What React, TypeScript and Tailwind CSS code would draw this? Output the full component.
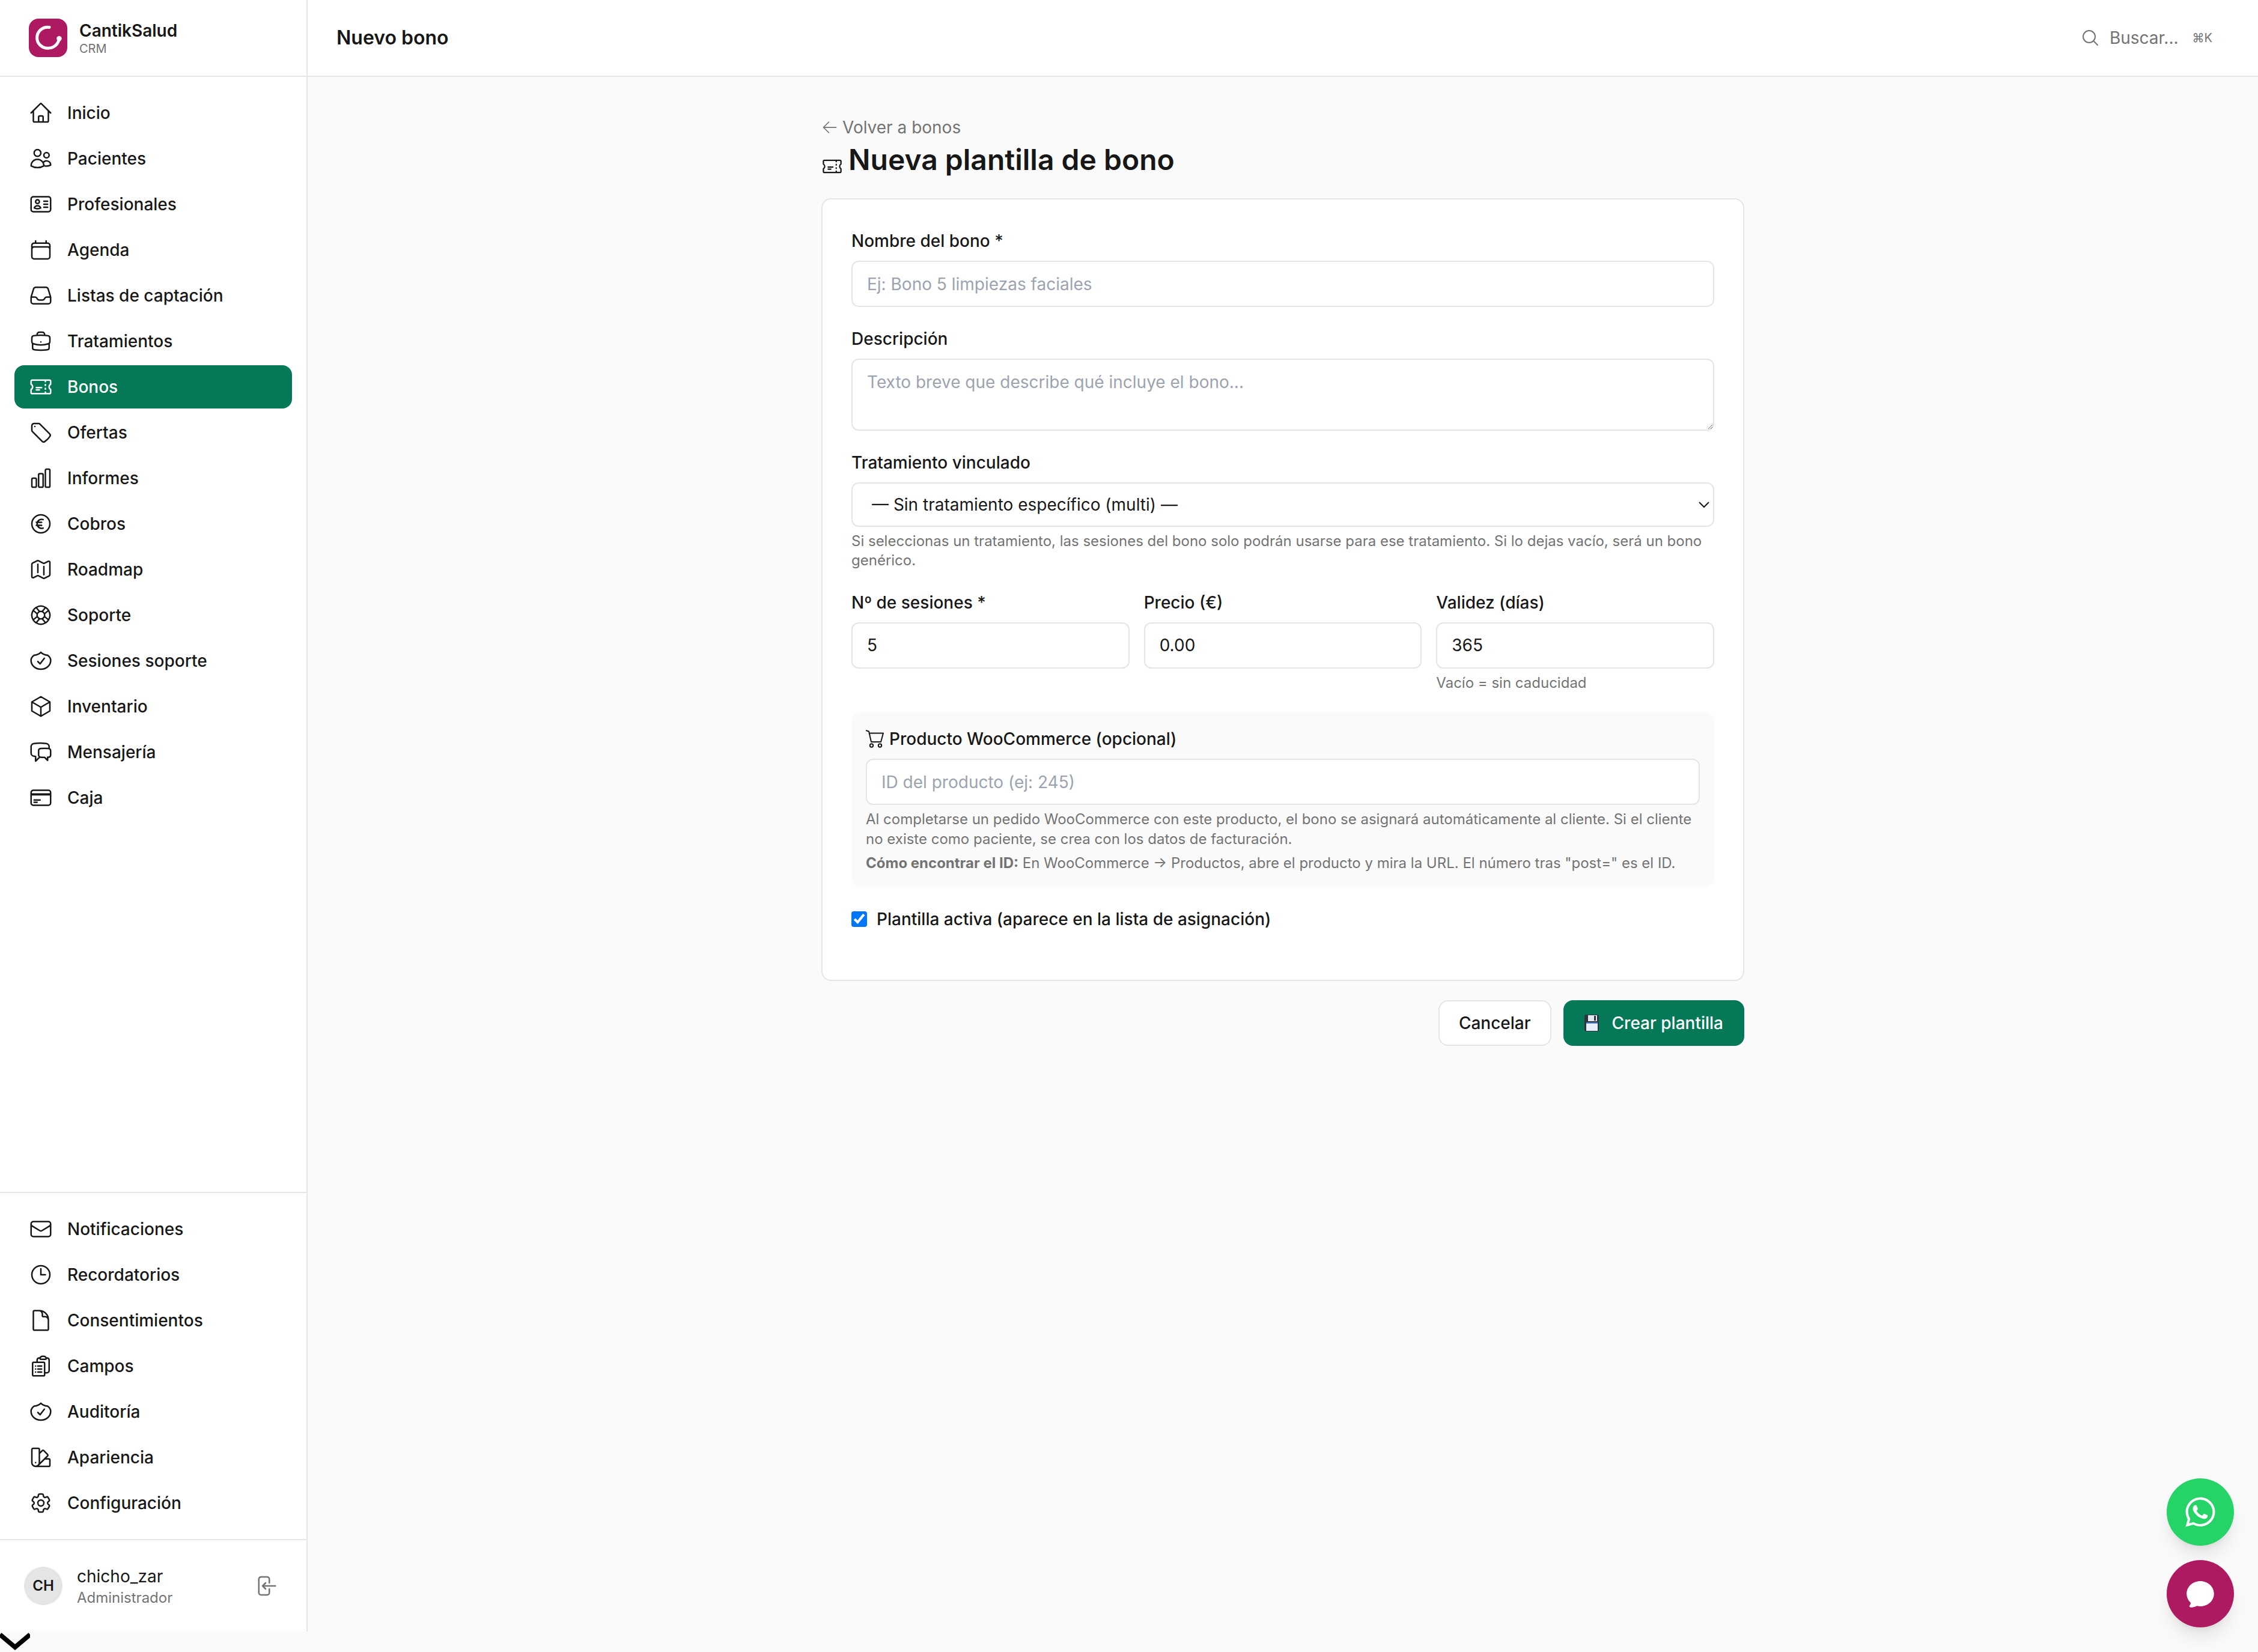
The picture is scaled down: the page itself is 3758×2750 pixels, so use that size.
import {
  HiOutlineHome,
  HiOutlineUsers,
  HiOutlineIdentification,
  HiOutlineCalendar,
  HiOutlineInbox,
  HiOutlineBriefcase,
  HiOutlineTicket,
  HiOutlineTag,
  HiOutlineChartBar,
  HiOutlineCurrencyEuro,
  HiOutlineMap,
  HiOutlineLifebuoy,
  HiOutlineCube,
  HiOutlineChatBubbleLeftRight,
  HiOutlineCreditCard,
  HiOutlineEnvelope,
  HiOutlineClock,
  HiOutlineDocument,
  HiOutlineClipboardDocumentList,
  HiOutlineSwatch,
  HiOutlineCog6Tooth,
  HiOutlineArrowLeftEndOnRectangle,
  HiOutlineMagnifyingGlass,
  HiOutlineArrowLeft,
  HiChatBubbleOvalLeft,
} from 'react-icons/hi2';
import { FaWhatsapp } from 'react-icons/fa';

// wide rounded shield, not the stock heroicon shape
function ShieldIcon({ className }: { className?: string }) {
  return (
    <svg viewBox="0 0 24 24" className={className} fill="none" stroke="currentColor" strokeWidth="1.5" strokeLinecap="round" strokeLinejoin="round">
      <path d="M12 3.5C13.6 5.2 16 6.2 18.8 6.5C20.8 8 21.8 9.5 21.8 11.5C21.8 16.5 17.5 20.4 12 20.4C6.5 20.4 2.2 16.5 2.2 11.5C2.2 9.5 3.2 8 5.2 6.5C8 6.2 10.4 5.2 12 3.5Z" />
      <path d="M9 12.75L11.25 15L15.5 9.5" />
    </svg>
  );
}

const mainNav = [
  { label: 'Inicio', icon: HiOutlineHome },
  { label: 'Pacientes', icon: HiOutlineUsers },
  { label: 'Profesionales', icon: HiOutlineIdentification },
  { label: 'Agenda', icon: HiOutlineCalendar },
  { label: 'Listas de captación', icon: HiOutlineInbox },
  { label: 'Tratamientos', icon: HiOutlineBriefcase },
  { label: 'Bonos', icon: HiOutlineTicket, active: true },
  { label: 'Ofertas', icon: HiOutlineTag },
  { label: 'Informes', icon: HiOutlineChartBar },
  { label: 'Cobros', icon: HiOutlineCurrencyEuro },
  { label: 'Roadmap', icon: HiOutlineMap },
  { label: 'Soporte', icon: HiOutlineLifebuoy },
  { label: 'Sesiones soporte', icon: ShieldIcon },
  { label: 'Inventario', icon: HiOutlineCube },
  { label: 'Mensajería', icon: HiOutlineChatBubbleLeftRight },
  { label: 'Caja', icon: HiOutlineCreditCard },
];

const bottomNav = [
  { label: 'Notificaciones', icon: HiOutlineEnvelope },
  { label: 'Recordatorios', icon: HiOutlineClock },
  { label: 'Consentimientos', icon: HiOutlineDocument },
  { label: 'Campos', icon: HiOutlineClipboardDocumentList },
  { label: 'Auditoría', icon: ShieldIcon },
  { label: 'Apariencia', icon: HiOutlineSwatch },
  { label: 'Configuración', icon: HiOutlineCog6Tooth },
];

function NavItem({ label, icon: Icon, active }: { label: string; icon: any; active?: boolean }) {
  return (
    <a
      className={
        active
          ? 'flex items-center gap-3 h-9 px-3 rounded-lg text-sm font-medium bg-[#047857] text-white'
          : 'flex items-center gap-3 h-9 px-3 rounded-lg text-sm font-medium text-[#171717]'
      }
    >
      <Icon className="w-5 h-5 shrink-0" />
      <span>{label}</span>
    </a>
  );
}

function Logo() {
  return (
    <div className="w-8 h-8 rounded-lg bg-[#ad1a62] shrink-0">
      <svg viewBox="0 0 32 32" className="w-8 h-8" fill="none">
        <path d="M17 7.2C11 6.5 6.8 11 6.8 16C6.8 21 11 24.6 16 24.6C20.5 24.6 24.2 21.5 25 17.5" stroke="#fff" strokeWidth="2.5" strokeLinecap="round" />
        <circle cx="25.2" cy="16.6" r="2.1" fill="#fff" />
      </svg>
    </div>
  );
}

function FloppyIcon() {
  return (
    <svg viewBox="0 0 24 28" className="w-3 h-3.5 shrink-0">
      <rect x="0" y="0" width="24" height="28" rx="3" fill="#2b3440" />
      <rect x="6" y="1" width="15" height="10" fill="#e4e8ee" />
      <rect x="16" y="2" width="3" height="8" fill="#2b3440" />
      <rect x="3" y="13" width="19" height="14" fill="#e6eefa" />
      <rect x="3" y="13" width="19" height="2" fill="#5a8fd8" />
    </svg>
  );
}

function CartIcon() {
  return (
    <svg viewBox="0 0 30 30" className="w-[15px] h-[15px] shrink-0" fill="none" stroke="currentColor" strokeWidth="2">
      <path d="M0 1L5 2.5L9 20H25L29 5.5H5.5" strokeLinejoin="round" />
      <circle cx="9.5" cy="26" r="2.7" />
      <circle cx="23.5" cy="26" r="2.7" />
    </svg>
  );
}

export default function App() {
  return (
    <div className="relative w-[1879px] h-[1375px] overflow-hidden bg-[#fafafa] text-[#171717] font-['Inter',sans-serif] [zoom:2]">
      <div className="flex h-[1358px]">
        {/* Sidebar */}
        <aside className="w-64 shrink-0 flex flex-col bg-white border-r border-[#e5e5e5]">
          <div className="h-16 shrink-0 flex items-center gap-2.5 px-6 border-b border-[#e5e5e5]">
            <Logo />
            <div className="pb-0.5">
              <div className="text-sm font-semibold leading-5">CantikSalud</div>
              <div className="text-[10px] leading-[10px] text-[#737373]">CRM</div>
            </div>
          </div>
          <nav className="flex-1 p-3 flex flex-col gap-0.5">
            {mainNav.map((item) => (
              <NavItem key={item.label} {...item} />
            ))}
          </nav>
          <div className="p-3 flex flex-col gap-0.5 border-t border-[#e5e5e5]">
            {bottomNav.map((item) => (
              <NavItem key={item.label} {...item} />
            ))}
          </div>
          <div className="h-[77px] shrink-0 flex items-center gap-3 px-5 border-t border-[#e5e5e5]">
            <div className="w-8 h-8 rounded-full bg-[#e5e5e5] flex items-center justify-center text-xs font-semibold">CH</div>
            <div className="flex-1">
              <div className="text-sm leading-5">chicho_zar</div>
              <div className="text-xs leading-4 text-[#737373]">Administrador</div>
            </div>
            <button className="p-1 text-[#737373]">
              <HiOutlineArrowLeftEndOnRectangle className="w-5 h-5" />
            </button>
          </div>
        </aside>

        {/* Main */}
        <div className="flex-1 flex flex-col min-w-0">
          <header className="h-16 shrink-0 flex items-center justify-between pl-6 pr-[20px] bg-white border-b border-[#e5e5e5]">
            <h2 className="text-base font-semibold">Nuevo bono</h2>
            <button className="flex items-center gap-2 pr-[18px] text-sm text-[#737373]">
              <HiOutlineMagnifyingGlass className="w-4 h-4" />
              <span>Buscar...</span>
              <span className="ml-[3.5px] text-[10px]">⌘K</span>
            </button>
          </header>

          <main className="flex-1 pt-8">
            <div className="max-w-3xl mx-auto">
              <div className="h-[21px] text-sm">
                <a className="inline-flex items-center gap-[3.5px] text-[#737373]">
                  <HiOutlineArrowLeft className="w-3.5 h-3.5" />
                  Volver a bonos
                </a>
              </div>
              <h1 className="text-2xl font-semibold mb-4">
                <HiOutlineTicket className="inline w-[18px] h-[18px] align-[-6px] mr-[-1.5px]" /> Nueva plantilla de bono
              </h1>

              <div className="bg-white border border-[#e5e5e5] rounded-lg p-6">
                <div className="mb-4">
                  <label className="block text-sm leading-normal font-medium mb-1.5">Nombre del bono *</label>
                  <input
                    className="block w-full h-[38.5px] px-3 text-sm border border-[#e5e5e5] rounded-md placeholder:text-[#9ca3af]"
                    placeholder="Ej: Bono 5 limpiezas faciales"
                  />
                </div>
                <div className="mb-4">
                  <label className="block text-sm leading-normal font-medium mb-1.5">Descripción</label>
                  <textarea
                    rows={2}
                    className="block w-full h-[60px] px-3 py-2 text-sm leading-normal border border-[#e5e5e5] rounded-md placeholder:text-[#9ca3af]"
                    placeholder="Texto breve que describe qué incluye el bono..."
                  />
                </div>
                <div className="mb-4">
                  <label className="block text-sm leading-normal font-medium mb-1.5">Tratamiento vinculado</label>
                  <select className="block w-full h-[37px] px-3 text-sm bg-white border border-[#e5e5e5] rounded-md">
                    <option>— Sin tratamiento específico (multi) —</option>
                  </select>
                  <p className="text-xs leading-[16.2px] text-[#737373] mt-1">
                    Si seleccionas un tratamiento, las sesiones del bono solo podrán usarse para ese tratamiento. Si lo dejas vacío, será un bono genérico.
                  </p>
                </div>
                <div className="grid grid-cols-3 gap-3 mb-4">
                  <div>
                    <label className="block text-sm leading-normal font-medium mb-1.5">Nº de sesiones *</label>
                    <input defaultValue="5" className="block w-full h-[38.5px] px-3 text-sm border border-[#e5e5e5] rounded-md" />
                  </div>
                  <div>
                    <label className="block text-sm leading-normal font-medium mb-1.5">Precio (€)</label>
                    <input defaultValue="0.00" className="block w-full h-[38.5px] px-3 text-sm border border-[#e5e5e5] rounded-md" />
                  </div>
                  <div>
                    <label className="block text-sm leading-normal font-medium mb-1.5">Validez (días)</label>
                    <input defaultValue="365" className="block w-full h-[38.5px] px-3 text-sm border border-[#e5e5e5] rounded-md" />
                    <p className="text-xs leading-[16.2px] text-[#737373] mt-1">Vacío = sin caducidad</p>
                  </div>
                </div>
                <div className="mb-4 p-3 bg-[#fafafa] rounded-lg">
                  <label className="flex items-center gap-[4.5px] text-sm leading-normal font-medium mb-1.5">
                    <CartIcon />
                    Producto WooCommerce (opcional)
                  </label>
                  <input
                    className="block w-full h-[38.5px] px-3 text-sm bg-white border border-[#e5e5e5] rounded-md placeholder:text-[#9ca3af]"
                    placeholder="ID del producto (ej: 245)"
                  />
                  <p className="text-xs leading-[16.2px] text-[#737373] mt-1">
                    Al completarse un pedido WooCommerce con este producto, el bono se asignará automáticamente al cliente. Si el cliente no existe como paciente, se crea con los datos de facturación.
                  </p>
                  <p className="text-xs leading-[16.2px] text-[#737373] mt-1">
                    <strong>Cómo encontrar el ID:</strong> En WooCommerce → Productos, abre el producto y mira la URL. El número tras "post=" es el ID.
                  </p>
                </div>
                <label className="mb-4 flex items-center gap-2 text-sm leading-normal font-medium">
                  <input type="checkbox" defaultChecked />
                  Plantilla activa (aparece en la lista de asignación)
                </label>
              </div>

              <div className="flex justify-end gap-2.5 mt-4">
                <button className="h-[38px] px-4 text-sm font-medium bg-white border border-[#e5e5e5] rounded-lg">Cancelar</button>
                <button className="h-[38px] px-[17.5px] flex items-center gap-[11px] text-sm font-medium text-white bg-[#047857] rounded-lg">
                  <FloppyIcon />
                  Crear plantilla
                </button>
              </div>
            </div>
          </main>
        </div>
      </div>

      {/* stray chevron at the page bottom */}
      <svg viewBox="0 0 25 16" className="absolute left-0 top-[1359px] w-[25px] h-4" fill="none">
        <path d="M0 1.5L12.5 12L25 1.5" stroke="#000" strokeWidth="3.8" />
      </svg>

      {/* Floating buttons */}
      <div className="absolute right-5 bottom-[20.5px] flex flex-col gap-3">
        <button className="w-14 h-14 rounded-full bg-[#25d366] text-white flex items-center justify-center shadow-lg">
          <FaWhatsapp className="w-7 h-7" />
        </button>
        <button className="w-14 h-14 rounded-full bg-[#ad1a62] text-white flex items-center justify-center shadow-lg">
          <HiChatBubbleOvalLeft className="w-7 h-7" />
        </button>
      </div>
    </div>
  );
}
